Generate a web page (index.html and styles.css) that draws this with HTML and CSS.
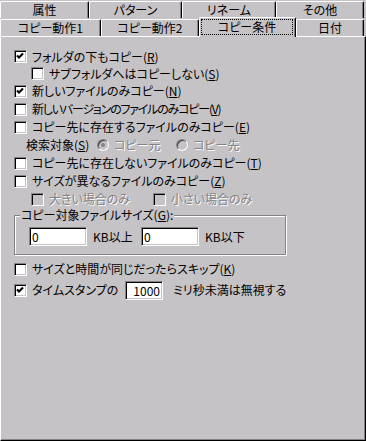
FILE: index.html
```html
<!DOCTYPE html>
<html lang="ja">
<head>
    <meta charset="UTF-8">
    <meta name="viewport" content="width=device-width, initial-scale=1.0">
    <title>コピー条件</title>
    <link rel="stylesheet" href="styles.css">
</head>
<body>
    <div class="dialog">
        <div class="tabs">
            <div class="tab-row">
                <div class="tab w-attr">属性</div>
                <div class="tab w-pattern">パターン</div>
                <div class="tab w-rename">リネーム</div>
                <div class="tab w-other">その他</div>
            </div>
            <div class="tab-row">
                <div class="tab w-act1">コピー動作1</div>
                <div class="tab w-act2">コピー動作2</div>
                <div class="tab active w-cond"><span class="focus">コピー条件</span></div>
                <div class="tab w-date">日付</div>
            </div>
        </div>

        <div class="panel">
            <div class="row tight">
                <span class="cb checked"><svg viewBox="0 0 11 11"><polyline points="2,4.5 4,6.5 8,2.5"/></svg></span>
                <span>フォルダの下もコピー(<u>R</u>)</span>
            </div>
            <div class="row tight indent">
                <span class="cb"></span>
                <span>サブフォルダへはコピーしない(<u>S</u>)</span>
            </div>
            <div class="row">
                <span class="cb checked"><svg viewBox="0 0 11 11"><polyline points="2,4.5 4,6.5 8,2.5"/></svg></span>
                <span>新しいファイルのみコピー(<u>N</u>)</span>
            </div>
            <div class="row">
                <span class="cb"></span>
                <span class="narrow">新しいバージョンのファイルのみコピー(<u>V</u>)</span>
            </div>
            <div class="row">
                <span class="cb"></span>
                <span>コピー先に存在するファイルのみコピー(<u>E</u>)</span>
            </div>
            <div class="row search">
                <span class="search-label">検索対象(<u>S</u>)</span>
                <span class="option first">
                    <span class="radio on"></span>
                    <span class="disabled">コピー元</span>
                </span>
                <span class="option">
                    <span class="radio"></span>
                    <span class="disabled">コピー先</span>
                </span>
            </div>
            <div class="row">
                <span class="cb"></span>
                <span>コピー先に存在しないファイルのみコピー(<u>T</u>)</span>
            </div>
            <div class="row">
                <span class="cb"></span>
                <span>サイズが異なるファイルのみコピー(<u>Z</u>)</span>
            </div>
            <div class="row indent">
                <span class="option size-first">
                    <span class="cb off"></span>
                    <span class="disabled">大きい場合のみ</span>
                </span>
                <span class="option">
                    <span class="cb off"></span>
                    <span class="disabled">小さい場合のみ</span>
                </span>
            </div>

            <fieldset class="group">
                <legend>コピー対象ファイルサイズ(<u>G</u>):</legend>
                <div class="size-row">
                    <input class="field size" type="text" value="0">
                    <span class="unit">KB以上</span>
                    <input class="field size" type="text" value="0">
                    <span class="unit">KB以下</span>
                </div>
            </fieldset>

            <div class="row skip">
                <span class="cb"></span>
                <span>サイズと時間が同じだったらスキップ(<u>K</u>)</span>
            </div>
            <div class="row stamp">
                <span class="cb checked"><svg viewBox="0 0 11 11"><polyline points="2,4.5 4,6.5 8,2.5"/></svg></span>
                <span class="stamp-label">タイムスタンプの</span>
                <input class="field ms" type="text" value="1000">
                <span class="ms-label">ミリ秒未満は無視する</span>
            </div>
        </div>
    </div>
</body>
</html>
```

FILE: styles.css
```css
:root {
    --face: #c6c3c6;
    --shadow: #848284;
    --light: #ffffff;
    --dark: #000000;
}

body {
    margin: 0;
    background: var(--face);
    font-family: "Noto Sans CJK JP", "Noto Sans", sans-serif;
    font-size: 12px;
    line-height: 14px;
    color: #000;
    font-feature-settings: "palt";
}

u {
    text-decoration: underline;
    text-underline-offset: 1px;
}

.dialog {
    width: 366px;
    height: 441px;
    display: flex;
    flex-direction: column;
}

/* tabs */

.tab-row {
    display: flex;
    height: 18px;
}

.tab {
    box-sizing: border-box;
    height: 17px;
    margin-top: 1px;
    display: flex;
    align-items: center;
    justify-content: center;
    background: var(--face);
    border-top: 1px solid var(--light);
    border-left: 1px solid var(--light);
    border-right: 1px solid var(--dark);
    box-shadow: inset -1px 0 0 var(--shadow);
    border-radius: 2px 2px 0 0;
}

.w-attr { width: 89px; }
.w-pattern { width: 93px; }
.w-rename { width: 94px; }
.w-other { width: 88px; }

.w-act1 { width: 101px; }
.w-act2 { width: 98px; }
.w-cond { width: 97px; }
.w-date { width: 68px; }

.tab.active {
    position: relative;
    z-index: 2;
    margin-top: -1px;
    height: 20px;
    align-items: stretch;
}

.focus {
    flex: 1;
    display: flex;
    align-items: center;
    justify-content: center;
    margin: 1px 2px 2px 1px;
    border: 1px dotted var(--dark);
}

/* page */

.panel {
    flex: 1;
    box-sizing: border-box;
    padding: 11px 0 0 13px;
    border-top: 1px solid var(--light);
    border-left: 1px solid var(--light);
    border-right: 1px solid var(--dark);
    border-bottom: 1px solid var(--dark);
    box-shadow: inset -1px -1px 0 var(--shadow);
}

.row {
    display: flex;
    align-items: center;
    gap: 5px;
    height: 18px;
    white-space: nowrap;
}

.row.tight {
    height: 17px;
}

.row.indent {
    padding-left: 17px;
}

.narrow {
    letter-spacing: -1.2px;
}

.cb {
    box-sizing: border-box;
    flex: none;
    width: 13px;
    height: 13px;
    background: var(--light);
    border: 1px solid;
    border-color: var(--shadow) var(--light) var(--light) var(--shadow);
    box-shadow: inset 1px 1px 0 var(--dark), inset -1px -1px 0 var(--face);
    display: flex;
}

.cb svg {
    width: 11px;
    height: 11px;
}

.cb polyline {
    fill: none;
    stroke: #000;
    stroke-width: 2.1;
    stroke-linecap: butt;
    stroke-linejoin: miter;
}

.cb.off {
    background: var(--face);
}

.disabled {
    color: var(--shadow);
    text-shadow: 1px 1px 0 var(--light);
}

.option {
    display: flex;
    align-items: center;
    gap: 5px;
}

/* search target row */

.row.search {
    gap: 0;
}

.search-label {
    width: 71px;
    padding-left: 12px;
}

.option.first {
    width: 79px;
}

.radio {
    position: relative;
    box-sizing: border-box;
    width: 12px;
    height: 12px;
    border-radius: 50%;
    background: var(--face);
    border: 1px solid;
    border-color: var(--shadow) var(--light) var(--light) var(--shadow);
    box-shadow: inset 1px 1px 0 #404040;
}

.radio.on::after {
    content: "";
    position: absolute;
    left: 3px;
    top: 3px;
    width: 4px;
    height: 4px;
    border-radius: 50%;
    background: var(--shadow);
}

.option.size-first {
    width: 117px;
}

/* size group */

.group {
    box-sizing: border-box;
    width: 272px;
    height: 47px;
    margin: 0;
    padding: 0;
    min-inline-size: 0;
    border: 1px solid var(--shadow);
    box-shadow: inset 1px 1px 0 var(--light), 1px 1px 0 var(--light);
}

.group legend {
    margin-left: 5px;
    padding: 0 1px;
    background: var(--face);
    line-height: 14px;
}

.size-row {
    display: flex;
    align-items: center;
    margin: 5px 0 0 14px;
}

.field {
    box-sizing: border-box;
    height: 19px;
    margin: 0;
    padding: 0 2px;
    background: var(--light);
    border: 1px solid;
    border-color: var(--shadow) var(--light) var(--light) var(--shadow);
    box-shadow: inset 1px 1px 0 var(--dark), inset -1px -1px 0 var(--face);
    font: inherit;
    color: #000;
    outline: none;
}

.field.size {
    width: 58px;
}

.unit {
    width: 48px;
    padding-left: 6px;
}

/* bottom rows */

.row.skip {
    margin-top: 5px;
}

.row.stamp {
    margin-top: 2px;
    height: 20px;
    gap: 0;
}

.stamp-label {
    box-sizing: border-box;
    width: 98px;
    padding-left: 5px;
}

.field.ms {
    width: 38px;
    text-align: right;
}

.ms-label {
    padding-left: 10px;
}
```
